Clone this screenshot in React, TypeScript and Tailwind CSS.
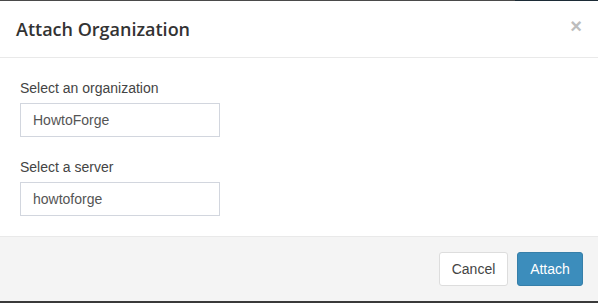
export default function App() {
  return (
    <div className="h-[303px] w-[598px] overflow-hidden bg-[#3a3a3a] font-['Liberation_Sans',Arial,sans-serif] text-[14px] text-[#333]">
      <div className="flex h-px">
        <div className="flex-1 bg-[#4a4a4a]" />
        <div className="w-[83px] bg-[#1c2b36]" />
      </div>
      <div className="flex h-[300px] flex-col bg-white">
        <div className="flex h-[57px] items-center justify-between border-b border-[#e9e9e9] pl-[16px] pr-[16px]">
          <h4 className="font-['Open_Sans',sans-serif] text-[18px] font-semibold text-[#333]">Attach Organization</h4>
          <span className="-mt-[6px] text-[20px] font-bold leading-none text-[#bdbdbd]">×</span>
        </div>
        <div className="flex-1 px-[20px] pt-[20px]">
          <div className="mb-[20px]">
            <label className="mb-[5px] block leading-[20px] text-[#444]">Select an organization</label>
            <div className="flex h-[34px] w-[200px] items-center border border-[#d2d6de] px-[12px] text-[#555]">HowtoForge</div>
          </div>
          <div>
            <label className="mb-[5px] block leading-[20px] text-[#444]">Select a server</label>
            <div className="flex h-[34px] w-[200px] items-center border border-[#d2d6de] px-[12px] text-[#555]">howtoforge</div>
          </div>
        </div>
        <div className="flex h-[65px] items-center justify-end gap-[9px] border-t border-[#e9e9e9] bg-[#f4f4f4] pr-[15px]">
          <button className="h-[34px] w-[69px] rounded-[3px] border border-[#ddd] bg-white text-[#444]">Cancel</button>
          <button className="h-[34px] w-[66px] rounded-[3px] border border-[#367fa9] bg-[#3c8dbc] text-white">Attach</button>
        </div>
      </div>
      <div className="h-[2px] bg-[#3a3a3a]" />
    </div>
  );
}
